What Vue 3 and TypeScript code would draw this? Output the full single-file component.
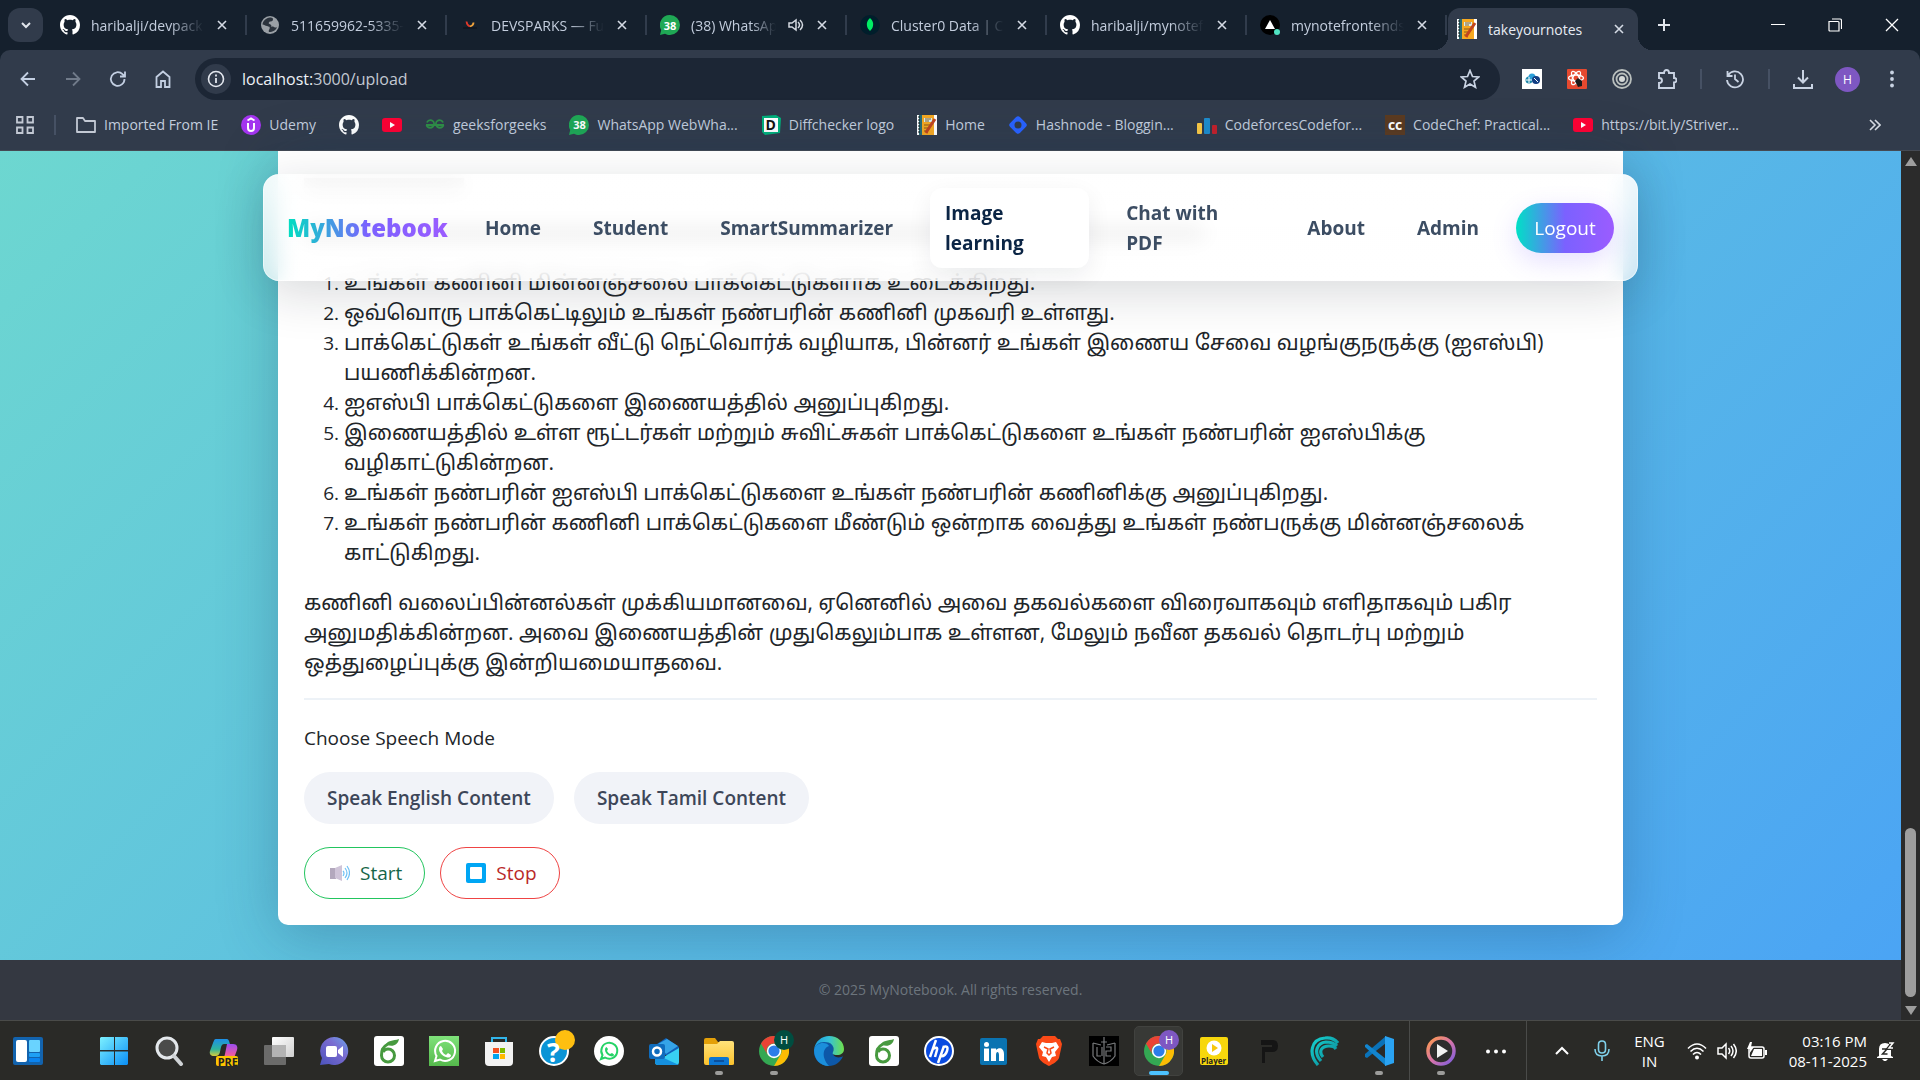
<script setup lang="ts">
interface Tab { title: string; icon: string; audio?: boolean }
interface Bookmark { label: string; icon: string }
interface Pin { name: string; icon: string; running?: boolean; active?: boolean; badge?: string }

const tabs: Tab[] = [
  { title: 'haribalji/devpack', icon: 'github' },
  { title: '511659962-5335-4', icon: 'globe' },
  { title: 'DEVSPARKS — Future', icon: 'spark' },
  { title: '(38) WhatsApp', icon: 'wa38', audio: true },
  { title: 'Cluster0 Data | Cloud', icon: 'mongo' },
  { title: 'haribalji/mynotefront', icon: 'github' },
  { title: 'mynotefrontends', icon: 'vercel' },
]

const bookmarks: Bookmark[] = [
  { label: 'Imported From IE', icon: 'folder' },
  { label: 'Udemy', icon: 'udemy' },
  { label: '', icon: 'github' },
  { label: '', icon: 'youtube' },
  { label: 'geeksforgeeks', icon: 'gfg' },
  { label: 'WhatsApp WebWha...', icon: 'wa38' },
  { label: 'Diffchecker logo', icon: 'diff' },
  { label: 'Home', icon: 'notes' },
  { label: 'Hashnode - Bloggin...', icon: 'hashnode' },
  { label: 'CodeforcesCodefor...', icon: 'codeforces' },
  { label: 'CodeChef: Practical...', icon: 'codechef' },
  { label: 'https://bit.ly/Striver...', icon: 'youtube' },
]

// Lettering that sits on top of an icon's artwork
const glyphs: Record<string, string> = {
  wa38: '38',
  diff: 'D',
  codechef: 'cc',
  copilot: 'PRE',
  help: '?',
  player: 'Player',
}

const steps: string[][] = [
  ['உங்கள் கணினி மின்னஞ்சலை பாக்கெட்டுகளாக உடைக்கிறது.'],
  ['ஒவ்வொரு பாக்கெட்டிலும் உங்கள் நண்பரின் கணினி முகவரி உள்ளது.'],
  ['பாக்கெட்டுகள் உங்கள் வீட்டு நெட்வொர்க் வழியாக, பின்னர் உங்கள் இணைய சேவை வழங்குநருக்கு (ஐஎஸ்பி)', 'பயணிக்கின்றன.'],
  ['ஐஎஸ்பி பாக்கெட்டுகளை இணையத்தில் அனுப்புகிறது.'],
  ['இணையத்தில் உள்ள ரூட்டர்கள் மற்றும் சுவிட்சுகள் பாக்கெட்டுகளை உங்கள் நண்பரின் ஐஎஸ்பிக்கு', 'வழிகாட்டுகின்றன.'],
  ['உங்கள் நண்பரின் ஐஎஸ்பி பாக்கெட்டுகளை உங்கள் நண்பரின் கணினிக்கு அனுப்புகிறது.'],
  ['உங்கள் நண்பரின் கணினி பாக்கெட்டுகளை மீண்டும் ஒன்றாக வைத்து உங்கள் நண்பருக்கு மின்னஞ்சலைக்', 'காட்டுகிறது.'],
]

const summary: string[] = [
  'கணினி வலைப்பின்னல்கள் முக்கியமானவை, ஏனெனில் அவை தகவல்களை விரைவாகவும் எளிதாகவும் பகிர',
  'அனுமதிக்கின்றன. அவை இணையத்தின் முதுகெலும்பாக உள்ளன, மேலும் நவீன தகவல் தொடர்பு மற்றும்',
  'ஒத்துழைப்புக்கு இன்றியமையாதவை.',
]

const pins: Pin[] = [
  { name: 'Start', icon: 'start' },
  { name: 'Search', icon: 'search' },
  { name: 'Copilot', icon: 'copilot' },
  { name: 'Task view', icon: 'taskview' },
  { name: 'Chat', icon: 'chat' },
  { name: 'Leaf', icon: 'leaf' },
  { name: 'WhatsApp', icon: 'wagreen' },
  { name: 'Store', icon: 'store' },
  { name: 'Help', icon: 'help' },
  { name: 'WhatsApp Web', icon: 'wawhite' },
  { name: 'Outlook', icon: 'outlook' },
  { name: 'File Explorer', icon: 'explorer', running: true },
  { name: 'Chrome', icon: 'chrome', running: true, badge: 'green' },
  { name: 'Edge', icon: 'edge' },
  { name: 'Leaf 2', icon: 'leaf' },
  { name: 'HP', icon: 'hp' },
  { name: 'LinkedIn', icon: 'linkedin' },
  { name: 'Brave', icon: 'brave' },
  { name: 'Shield', icon: 'shield' },
  { name: 'Chrome profile', icon: 'chrome', active: true, badge: 'purple' },
  { name: 'Player', icon: 'player' },
  { name: 'P', icon: 'pglyph' },
  { name: 'Wave', icon: 'wave' },
  { name: 'VS Code', icon: 'vscode', running: true },
]
</script>

<template>
  <div class="desktop">
    <svg class="sprite" aria-hidden="true">
      <defs>
        <linearGradient id="g-win" x1="0" y1="0" x2="1" y2="1"><stop offset="0" stop-color="#7df1ff" /><stop offset="1" stop-color="#0a8ef5" /></linearGradient>
        <linearGradient id="g-cop1" x1="0" y1="0" x2="0" y2="1"><stop offset="0" stop-color="#1d8fe8" /><stop offset=".6" stop-color="#2fb49c" /><stop offset="1" stop-color="#d8cf3a" /></linearGradient>
        <linearGradient id="g-cop2" x1="0" y1="0" x2="0" y2="1"><stop offset="0" stop-color="#9b4df0" /><stop offset=".6" stop-color="#e858a8" /><stop offset="1" stop-color="#ff9a5c" /></linearGradient>
        <linearGradient id="g-chat" x1="0" y1="1" x2="1" y2="0"><stop offset="0" stop-color="#4b53bc" /><stop offset=".6" stop-color="#7a6bd0" /><stop offset="1" stop-color="#6aa5ea" /></linearGradient>
        <linearGradient id="g-wa" x1="0" y1="0" x2="0" y2="1"><stop offset="0" stop-color="#7fe27a" /><stop offset="1" stop-color="#55b94c" /></linearGradient>
        <linearGradient id="g-edge" x1="0" y1="0" x2="1" y2="0"><stop offset="0" stop-color="#1b9de2" /><stop offset=".5" stop-color="#35c1d8" /><stop offset="1" stop-color="#6fe04a" /></linearGradient>
        <linearGradient id="g-fold" x1="0" y1="0" x2="0" y2="1"><stop offset="0" stop-color="#ffe27a" /><stop offset="1" stop-color="#fcc22d" /></linearGradient>
        <linearGradient id="g-media" x1="0" y1="0" x2="1" y2="1"><stop offset="0" stop-color="#ff9b4a" /><stop offset=".5" stop-color="#d875a8" /><stop offset="1" stop-color="#7a5be0" /></linearGradient>
        <linearGradient id="g-wave" x1="0" y1="0" x2="1" y2="1"><stop offset="0" stop-color="#16d3d0" /><stop offset="1" stop-color="#0a7f90" /></linearGradient>
        <linearGradient id="g-paper" x1="0" y1="0" x2="1" y2="1"><stop offset="0" stop-color="#fff" /><stop offset="1" stop-color="#cfcfcf" /></linearGradient>
      </defs>

      <symbol id="i-github" viewBox="0 0 16 16"><path fill="#fff" fill-rule="evenodd" d="M8 0C3.58 0 0 3.58 0 8c0 3.54 2.29 6.53 5.47 7.59.4.07.55-.17.55-.38 0-.19-.01-.82-.01-1.49-2.01.37-2.53-.49-2.69-.94-.09-.23-.48-.94-.82-1.13-.28-.15-.68-.52-.01-.53.63-.01 1.08.58 1.23.82.72 1.21 1.87.87 2.33.66.07-.52.28-.87.51-1.07-1.78-.2-3.64-.89-3.64-3.95 0-.87.31-1.59.82-2.15-.08-.2-.36-1.02.08-2.12 0 0 .67-.21 2.2.82.64-.18 1.32-.27 2-.27s1.36.09 2 .27c1.53-1.04 2.2-.82 2.2-.82.44 1.1.16 1.92.08 2.12.51.56.82 1.27.82 2.15 0 3.07-1.87 3.75-3.65 3.95.29.25.54.73.54 1.48 0 1.07-.01 1.93-.01 2.2 0 .21.15.46.55.38A8.01 8.01 0 0016 8c0-4.42-3.58-8-8-8z" /></symbol>
      <symbol id="i-globe" viewBox="0 0 20 20"><circle cx="10" cy="10" r="9" fill="#9aa0a6" /><path fill="#2b333d" d="M10 2.500c-4 .5-7 3-7.500 7 2 0 2.500 1.500 4.500 1.500 1 0 1.500 1 3 1 2.500 0 1.500-2.500-.5-3-1.500-.5-.5-2.500 1-2.500 2 0 2.500-1 2.500-2.500 0-1-1.500-1.500-3-1.500zM9.500 12c1 2-1.500 3-.5 5 4 0 7-1.500 8-5-2 1.500-3-.5-4-.5s-2 .5-3.500.5z" /></symbol>
      <symbol id="i-spark" viewBox="0 0 20 20"><path d="M6.500 6.500q.5 4 3.500 5" stroke="#e0392b" stroke-width="1.800" fill="none" /><path d="M10 11.500q3.500-1 3.500-4" stroke="#f0a33c" stroke-width="1.800" fill="none" /><path d="M3 13h14" stroke="#0c1118" stroke-width="1" /></symbol>
      <symbol id="i-wa38" viewBox="0 0 20 20"><path fill="#1fa855" d="M10 0a10 10 0 0 1 0 20c-2 0-3.500-.5-5-1.300L0 20l1.200-5A10 10 0 0 1 10 0z" /></symbol>
      <symbol id="i-mongo" viewBox="0 0 20 20"><circle cx="10" cy="10" r="10" fill="#001e2b" /><path fill="#00ed64" d="M10 3c3 3 3.500 5 3 8-.4 2-1.500 3.500-3 5-1.500-1.500-2.600-3-3-5-.5-3 0-5 3-8z" /></symbol>
      <symbol id="i-vercel" viewBox="0 0 20 20"><circle cx="10" cy="10" r="10" fill="#000" /><path fill="#fff" d="M10 5l5 9H5z" /><circle cx="17" cy="17" r="3" fill="#50e3c2" /></symbol>
      <symbol id="i-notes" viewBox="0 0 20 20"><path fill="#fff" d="M0 0h20v20H0z" /><path fill="#2a6a72" d="M2 0h3v20H2z" /><path fill="#f6a821" d="M5 0h12v20H5z" /><path fill="#d9eef0" d="M7 3h8v4H7z" /><path d="M8 4h6M8 6h4M7 10h6M7 13h4M7 16h3" stroke="#8a5a18" stroke-width="1" /><path d="M18 4L10 16l-1 2" stroke="#c0451f" stroke-width="3" fill="none" /><path d="M1 2h2M1 5h2M1 8h2M1 11h2M1 14h2M1 17h2" stroke="#111" stroke-width="1" /></symbol>
      <symbol id="i-folder" viewBox="0 0 20 20"><path fill="none" stroke="#c3c9d4" stroke-width="1.800" stroke-linejoin="round" d="M1 17V3h6l2 3h10v11z" /></symbol>
      <symbol id="i-udemy" viewBox="0 0 20 20"><circle cx="10" cy="10" r="10" fill="#a435f0" /><path d="M6.500 5.500L10 3.500l3.500 2M7 8v5a3 3 0 0 0 6 0V8" stroke="#fff" stroke-width="2" fill="none" /></symbol>
      <symbol id="i-youtube" viewBox="0 0 20 20"><rect y="3" width="20" height="14" rx="3" fill="#ff0033" /><path fill="#fff" d="M8 7l5 3-5 3z" /></symbol>
      <symbol id="i-gfg" viewBox="0 0 20 20"><path fill="none" stroke="#2f8d46" stroke-width="1.800" d="M1 10h18M2 7.500A3.600 3.600 0 0 1 8.800 10 3.800 3.800 0 0 1 1.500 10M18 7.500A3.600 3.600 0 0 0 11.200 10a3.800 3.800 0 0 0 7.300 0" /></symbol>
      <symbol id="i-diff" viewBox="0 0 20 20"><path fill="#00b07b" d="M1 1l14-1 5 3-1 15-15 2-3-3z" /><rect x="3" y="3" width="14" height="14" fill="#fff" /></symbol>
      <symbol id="i-hashnode" viewBox="0 0 20 20"><rect x="3" y="3" width="14" height="14" rx="3" fill="#2962ff" transform="rotate(45 10 10)" /><circle cx="10" cy="10" r="3.500" fill="#313b4b" /></symbol>
      <symbol id="i-codeforces" viewBox="0 0 20 20"><rect x="0" y="8" width="5" height="11" rx="1" fill="#fbc944" /><rect x="7" y="3" width="6" height="16" rx="1" fill="#1e8ccc" /><rect x="15" y="10" width="5" height="9" rx="1" fill="#c4202a" /></symbol>
      <symbol id="i-codechef" viewBox="0 0 20 20"><path fill="#5b3a20" d="M0 0h20v20H0z" /></symbol>

      <symbol id="i-widgets" viewBox="0 0 30 30"><rect width="30" height="28" y="1" rx="2" fill="#1263ae" /><rect x="3" y="4" width="11" height="22" rx="2" fill="#fff" /><rect x="16" y="4" width="11" height="12" rx="1" fill="#69d3ff" /><rect x="16" y="17" width="11" height="4" rx="1" fill="#1ea0f5" /><rect x="16" y="22" width="11" height="4" rx="1" fill="#0a84f0" /></symbol>
      <symbol id="i-start" viewBox="0 0 30 30"><path fill="url(#g-win)" d="M2 1h13v13H1V2zM16 1h12l1 1v12H16zM1 15.500h14V29H2l-1-1zM16 15.500h13V28l-1 1H16z" /></symbol>
      <symbol id="i-search" viewBox="0 0 30 30"><circle cx="13" cy="12" r="10" fill="#4a4b4a" stroke="#e4e8ec" stroke-width="3" /><path d="M20 20l7 8" stroke="#cfd3d6" stroke-width="4" stroke-linecap="round" /></symbol>
      <symbol id="i-copilot" viewBox="0 0 30 30"><path fill="url(#g-cop1)" d="M7 3h10c3 0 3 2 4 5h-6c-3 0-3 4-4 8s-3 4-6 4-5-2-4-5l3-8c1-2 1-4 3-4z" /><path fill="url(#g-cop2)" d="M18 8h6c4 0 5 3 4 6l-3 8c-1 2-2 3-5 3h-8c3 0 3-4 4-7z" /><rect x="7" y="20" width="22" height="10" rx="2" fill="#fdc500" /></symbol>
      <symbol id="i-taskview" viewBox="0 0 30 30"><rect x="8" y="1" width="22" height="20" rx="1" fill="url(#g-paper)" /><rect x="0" y="9" width="22" height="20" rx="1" fill="#777" opacity=".85" /><path d="M8 9h14v12H8z" fill="#b3b3b3" /></symbol>
      <symbol id="i-chat" viewBox="0 0 30 30"><path fill="url(#g-chat)" d="M15 1a14 14 0 1 1-5 27l-9 1 2-7A14 14 0 0 1 15 1z" /><rect x="7" y="10" width="11" height="11" rx="2" fill="#fff" /><path fill="#fff" d="M19 14l5-4v11l-5-4z" /></symbol>
      <symbol id="i-leaf" viewBox="0 0 30 30"><rect width="30" height="30" rx="3" fill="#fff" /><path d="M14 8C8 11 7.500 15 7.500 19.500a6.500 6.500 0 1 0 6.500-6.500q-3 0-5 3" fill="none" stroke="#479a3f" stroke-width="3" /><path fill="#479a3f" d="M12 9c1-5 7-4 13-6-1 6-6 8-12 6z" /></symbol>
      <symbol id="i-wagreen" viewBox="0 0 30 30"><path fill="url(#g-wa)" d="M0 0h30v30H0z" /><path d="M6 25l1.500-5A10 10 0 1 1 11 23.500z" fill="none" stroke="#fff" stroke-width="2" /><path fill="#fff" d="M12 10l2 3-1 2c1 2 2 3 4 4l2-2 3 2c0 3-3 3-5 2-4-1-7-5-7-8 0-2 1-3 2-3z" /></symbol>
      <symbol id="i-store" viewBox="0 0 30 30"><path d="M8 8V2h14v6" fill="none" stroke="#31b5ea" stroke-width="2" /><path fill="#f2f2f2" d="M1 6h28v20q0 4-4 4H5q-4 0-4-4z" /><path fill="#f25022" d="M9 12h6v5H9z" /><path fill="#7fba00" d="M16 12h5v5h-5z" /><path fill="#00a4ef" d="M9 18h6v5H9z" /><path fill="#ffb900" d="M16 18h5v5h-5z" /></symbol>
      <symbol id="i-help" viewBox="0 0 36 36"><circle cx="15" cy="21" r="14" fill="#0a94d6" stroke="#fff" stroke-width="2" /><circle cx="26" cy="10" r="10" fill="#ffbf10" /></symbol>
      <symbol id="i-wawhite" viewBox="0 0 30 30"><circle cx="15" cy="15" r="15" fill="#fff" /><path d="M7 23l1.500-4A8 8 0 1 1 11 21.500z" fill="none" stroke="#25d366" stroke-width="2" /><path fill="#25d366" d="M12.500 11l1.500 2-1 2c1 1.500 2 2.500 3 3l2-1 2 1.500c0 2-2 2.500-4 1.500-3-1-5-4-5-6 0-2 .500-2.500 1.500-3z" /></symbol>
      <symbol id="i-outlook" viewBox="0 0 30 30"><path fill="#0f5fb8" d="M5 10L17 2l13 9v8H5z" /><path fill="#35a4e8" d="M9 8l9-5 11 7-12 8z" /><path fill="#38d0f2" d="M30 12v14q0 3-3 3H9q-3 0-3-3z" /><path fill="#1590df" d="M6 18l24 11H9q-3 0-3-3z" /><rect x="0" y="8" width="16" height="15" rx="2" fill="#0f6cbd" /><circle cx="8" cy="15.500" r="4" fill="none" stroke="#fff" stroke-width="2.500" /></symbol>
      <symbol id="i-explorer" viewBox="0 0 30 30"><path fill="#e3a008" d="M0 4q0-2 2-2h9l3 4h12v6H0z" /><path fill="url(#g-fold)" d="M0 8h13l3-3h12q2 0 2 2v21q0 1-2 1H2q-2 0-2-2z" /><path fill="#0c75d1" d="M5 29v-6q0-2 2-2h16q2 0 2 2v6z" /><path d="M10 25h10" stroke="#0a4f9c" stroke-width="2" /></symbol>
      <symbol id="i-chrome" viewBox="0 0 30 30"><circle cx="15" cy="15" r="15" fill="#34a853" /><path fill="#ea4335" d="M2 7.500A15 15 0 0 1 28 7.500H15a7.500 7.500 0 0 0-6.500 11.200z" /><path fill="#fbbc04" d="M28 7.500A15 15 0 0 1 15 30l6.500-11.200A7.500 7.500 0 0 0 15 7.500z" /><circle cx="15" cy="15" r="7.200" fill="#fff" /><circle cx="15" cy="15" r="5.600" fill="#2b7de9" /></symbol>
      <symbol id="i-edge" viewBox="0 0 30 30"><path fill="#0d58a8" d="M0 16C0 7 7 4 13 6c6 1 8 6 6 10-1 5 6 7 10 4-2 6-8 10-14 10C7 30 0 24 0 16z" /><path fill="url(#g-edge)" d="M0 14C1 5 8 0 15 0c9 0 15 6 15 13 0 4-3 6-7 6s-5-1-4-3c2-5-1-10-9-10C5 6 1 9 0 14z" /><path fill="#1b8fdb" d="M0 14c1-5 5-7 9-7 3 0 5 1 6 3-6 2-8 11 0 20C6 30 0 23 0 14z" /></symbol>
      <symbol id="i-hp" viewBox="0 0 30 30"><circle cx="15" cy="15" r="14" fill="#0a4be0" stroke="#fff" stroke-width="2" /><path d="M12 4L6 21M9 13q5-3 4 1l-2 7M20 10l-6 17M19 11q6-2 4 4-2 6-7 5" fill="none" stroke="#fff" stroke-width="2.500" /></symbol>
      <symbol id="i-linkedin" viewBox="0 0 30 30"><rect x="1" y="2" width="27" height="27" rx="2" fill="#0a73b1" /><circle cx="7.500" cy="8.500" r="2.500" fill="#fff" /><path fill="#fff" d="M5 12.500h5V25H5zM12 12.500h5V14c3-3 8-2 8 4v7h-5v-6c0-4-3-4-3 0v6h-5z" /></symbol>
      <symbol id="i-brave" viewBox="0 0 30 30"><path fill="#fb4a17" d="M9 0h12l3 3h2l2 5-1 5-2 9c-1 3-6 6-10 8-4-2-9-5-10-8L3 13 2 8l2-5h2z" /><path fill="#fff" d="M8 6l4 1h6l4-1 3 5-4 5 1 4-4 1-3 5-3-5-4-1 1-4-4-5z" /><path d="M10 11l4 2-1 4 2 2 2-2-1-4 4-2" stroke="#fb4a17" stroke-width="1.500" fill="none" /></symbol>
      <symbol id="i-shield" viewBox="0 0 30 30"><path d="M0 0h30v30H0z" /><path d="M15 1v27M12 6h6M4 7l8 2M26 7l-8 2M4 7v13q4 6 11 8 7-2 11-8V7M8 11v9h4M13 11v9M17 11h5v4h-5v5h5" fill="none" stroke="#77797b" stroke-width="1.200" /></symbol>
      <symbol id="i-player" viewBox="0 0 30 30"><rect x="1" y="1" width="28" height="28" rx="2" fill="#f7d70c" /><circle cx="15" cy="12" r="7.500" fill="#fff" /><path fill="#f7c80c" d="M13 8l6 4-6 4z" /></symbol>
      <symbol id="i-pglyph" viewBox="0 0 30 30"><path fill="#151515" d="M7 4h12q5 0 5 6t-6 6h-7v11H8V11h10V9H7z" /></symbol>
      <symbol id="i-wave" viewBox="0 0 30 30"><path d="M9 29C-1 18 2 3 16 2q8-1 13 5M12 25C4 16 8 7 17 6q7 0 11 4M14 21c-5-6-1-11 6-11q5 0 7 3" fill="none" stroke="url(#g-wave)" stroke-width="3.200" /></symbol>
      <symbol id="i-vscode" viewBox="0 0 30 30"><path fill="#0a72b8" d="M22 0L1 18v3l2 1 19-15z" /><path fill="#1285cf" d="M22 30L1 11V9l2-1 19 15z" /><path fill="#2aa3f2" d="M21 0l9 3v24l-9 3z" /></symbol>
      <symbol id="i-media" viewBox="0 0 30 30"><circle cx="15" cy="15" r="13" fill="#2d2d2d" stroke="url(#g-media)" stroke-width="3.500" /><path fill="#f2f2f2" d="M11 8l11 7-11 7z" /></symbol>
    </svg>

    <header class="chrome">
      <div class="tabstrip">
        <button class="tab-search" aria-label="Search tabs"><svg width="12" height="8" viewBox="0 0 12 8"><path d="M2 2l4 4 4-4" fill="none" stroke="#e1e5ec" stroke-width="2" /></svg></button>
        <div v-for="(t, i) in tabs" :key="i" class="tab">
          <span class="fav"><svg><use :href="'#i-' + t.icon" /></svg><b v-if="glyphs[t.icon]" class="glyph" :class="t.icon">{{ glyphs[t.icon] }}</b></span>
          <span class="tab-title">{{ t.title }}</span>
          <svg v-if="t.audio" class="audio" viewBox="0 0 16 16"><path d="M1 6h3l4-3v10L4 10H1zM10 5q3 3 0 6M12 3q5 5 0 10" fill="none" stroke="#d3d8e0" stroke-width="1.500" /></svg>
          <button class="close" aria-label="Close tab"><svg viewBox="0 0 10 10"><path d="M1 1l8 8M9 1L1 9" /></svg></button>
        </div>
        <div class="tab selected">
          <span class="fav"><svg><use href="#i-notes" /></svg></span>
          <span class="tab-title">takeyournotes</span>
          <button class="close" aria-label="Close tab"><svg viewBox="0 0 10 10"><path d="M1 1l8 8M9 1L1 9" /></svg></button>
        </div>
        <button class="plain new-tab" aria-label="New tab"><svg width="14" height="14" viewBox="0 0 14 14"><path d="M7 1v12M1 7h12" stroke="#e1e5ec" stroke-width="2" /></svg></button>
        <div class="win-controls">
          <button class="plain" aria-label="Minimize"><svg width="14" height="14" viewBox="0 0 14 14"><path d="M0 6.500h14" stroke="#fff" stroke-width="1" /></svg></button>
          <button class="plain" aria-label="Restore"><svg width="14" height="14" viewBox="0 0 14 14"><path d="M1 3.500h9q1 0 1 1V13H2q-1 0-1-1zM4 1h8q1.500 0 1.500 1.500V11" fill="none" stroke="#fff" stroke-width="1.200" /></svg></button>
          <button class="plain" aria-label="Close"><svg width="14" height="14" viewBox="0 0 14 14"><path d="M1 1l12 12M13 1L1 13" stroke="#fff" stroke-width="1.300" /></svg></button>
        </div>
      </div>

      <div class="toolbar">
        <button class="plain tool" aria-label="Back"><svg viewBox="0 0 20 20"><path d="M17 10H4M10 3.500L3.500 10l6.500 6.500" /></svg></button>
        <button class="plain tool dim" aria-label="Forward"><svg viewBox="0 0 20 20"><path d="M3 10h13M10 3.500l6.500 6.500-6.500 6.500" /></svg></button>
        <button class="plain tool" aria-label="Reload"><svg viewBox="0 0 20 20"><path d="M16.500 10A6.800 6.800 0 1 1 14.500 5.200L17 7.500M17 2.500v5h-5" /></svg></button>
        <button class="plain tool" aria-label="Home"><svg viewBox="0 0 20 20"><path d="M3.500 18V8L10 2.500 16.500 8v10H12v-6H8v6z" /></svg></button>
        <div class="omnibox">
          <span class="info"><svg width="18" height="18" viewBox="0 0 18 18"><circle cx="9" cy="9" r="7.500" fill="none" stroke="#e3e7ee" stroke-width="1.600" /><path d="M9 8v5M9 4.500v2" stroke="#e3e7ee" stroke-width="1.800" /></svg></span>
          <span class="url"><b>localhost:</b>3000/upload</span>
          <button class="plain" aria-label="Bookmark"><svg width="20" height="20" viewBox="0 0 20 20"><path d="M10 1.500l2.500 6 6.200.500-4.700 4.100 1.500 6.200L10 15l-5.500 3.300L6 12.100 1.300 8l6.200-.500z" fill="none" stroke="#c9d3e3" stroke-width="1.700" /></svg></button>
        </div>
        <div class="extensions">
          <svg viewBox="0 0 20 20"><path d="M0 0h20v20H0z" fill="#fff" /><circle cx="7" cy="11" r="3.500" fill="#1d86a8" /><circle cx="10" cy="8" r="3.500" fill="#2c9fd8" /><circle cx="14" cy="11" r="4" fill="#123e84" /><path d="M7 8v6M4 11h6M12 9l4 4" stroke="#fff" stroke-width="1" /></svg>
          <svg viewBox="0 0 20 20"><rect width="20" height="20" rx="1" fill="#e6492f" /><g fill="none" stroke="#fff" stroke-width="1.300"><ellipse cx="9" cy="9" rx="7.500" ry="3" /><ellipse cx="9" cy="9" rx="7.500" ry="3" transform="rotate(60 9 9)" /><ellipse cx="9" cy="9" rx="7.500" ry="3" transform="rotate(120 9 9)" /></g><path d="M8 12l3-3 4 3v5l-4 1z" fill="#1c1c1c" /></svg>
          <svg viewBox="0 0 20 20"><g fill="none" stroke="#b9bfbd" stroke-width="1.800"><circle cx="10" cy="10" r="9" /><circle cx="10" cy="10" r="5.500" /></g><circle cx="10" cy="10" r="3" fill="#d5d9d8" /></svg>
          <svg viewBox="0 0 20 20"><path d="M2 4h5q0-3 2.500-3T12 4h5v5q2.500 0 2.500 2.200T17 13.500V19H2v-5q3 0 3-2.500T2 9z" fill="none" stroke="#c9d3e3" stroke-width="1.900" /></svg>
          <i class="rule"></i>
          <svg viewBox="0 0 20 20"><path d="M3 6.500A8 8 0 1 1 2 11M2.500 2v5h5M10 5.500V10l3.500 3" fill="none" stroke="#c9d3e3" stroke-width="1.800" /></svg>
          <i class="rule"></i>
          <svg viewBox="0 0 20 20"><path d="M10 1v12M5 8.500l5 5 5-5M1 15v4h18v-4" fill="none" stroke="#c9d3e3" stroke-width="2" /></svg>
          <span class="avatar">H</span>
          <svg viewBox="0 0 20 20"><g fill="#c9d3e3"><circle cx="10" cy="3.500" r="1.900" /><circle cx="10" cy="10" r="1.900" /><circle cx="10" cy="16.500" r="1.900" /></g></svg>
        </div>
      </div>

      <nav class="bookmarks" aria-label="Bookmarks">
        <svg class="apps" viewBox="0 0 18 18"><path d="M1 1h5.500v5.500H1zM11.500 1H17v5.500h-5.500zM1 11.500h5.500V17H1zM11.500 11.500H17V17h-5.500z" fill="none" stroke="#c3c9d4" stroke-width="1.800" /></svg>
        <i class="rule"></i>
        <a v-for="(b, i) in bookmarks" :key="i" href="#" class="bookmark" :aria-label="b.label || b.icon">
          <span class="fav"><svg><use :href="'#i-' + b.icon" /></svg><b v-if="glyphs[b.icon]" class="glyph" :class="b.icon">{{ glyphs[b.icon] }}</b></span>
          <span v-if="b.label">{{ b.label }}</span>
        </a>
        <button class="plain more" aria-label="More bookmarks"><svg width="12" height="12" viewBox="0 0 12 12"><path d="M1 1l5 5-5 5M6 1l5 5-5 5" fill="none" stroke="#d5dae2" stroke-width="1.600" /></svg></button>
      </nav>
    </header>

    <div class="viewport">
      <div class="page">
        <nav class="navbar" aria-label="Main">
          <span class="brand">MyNotebook</span>
          <a href="#">Home</a>
          <a href="#">Student</a>
          <a href="#">SmartSummarizer</a>
          <a href="#" class="current">Image<br>learning</a>
          <a href="#" class="chat">Chat with<br>PDF</a>
          <a href="#">About</a>
          <a href="#">Admin</a>
          <button class="logout">Logout</button>
        </nav>

        <main class="stage">
          <section class="card">
            <div class="passed short"></div>
            <div class="passed long"></div>
            <ol>
              <li v-for="(s, i) in steps" :key="i"><template v-for="(l, j) in s" :key="j"><br v-if="j">{{ l }}</template></li>
            </ol>
            <p><template v-for="(l, j) in summary" :key="j"><br v-if="j">{{ l }}</template></p>
            <hr>
            <div>Choose Speech Mode</div>
            <div class="modes">
              <button>Speak English Content</button>
              <button>Speak Tamil Content</button>
            </div>
            <div class="actions">
              <button class="start"><svg viewBox="0 0 20 20"><path fill="#b3a8bd" d="M0 5h6v11H0z" /><path fill="#cfc4d8" d="M5 5l7-3v16l-7-3z" /><path d="M13 8q2 2 0 5M15 5q4 5 0 10M17 3q5 7 0 14" fill="none" stroke="#6fc0f5" stroke-width="1.200" /></svg>Start</button>
              <button class="stop"><svg viewBox="0 0 20 20"><rect width="20" height="20" rx="2" fill="#00a6f4" /><rect x="4" y="4" width="12" height="12" rx="1" fill="#fff" /></svg>Stop</button>
            </div>
          </section>
        </main>

        <footer>© 2025 MyNotebook. All rights reserved.</footer>
      </div>

      <div class="scrollbar" aria-hidden="true">
        <svg viewBox="0 0 12 10"><path d="M6 0l6 9H0z" fill="#9e9e9e" /></svg>
        <i class="thumb"></i>
        <svg viewBox="0 0 12 10"><path d="M6 10L0 1h12z" fill="#9e9e9e" /></svg>
      </div>
    </div>

    <div class="taskbar">
      <button class="pin widgets" aria-label="Widgets"><svg><use href="#i-widgets" /></svg></button>
      <button v-for="p in pins" :key="p.name" class="pin" :class="{ running: p.running, active: p.active, wide: p.icon === 'help' }" :aria-label="p.name">
        <svg><use :href="'#i-' + p.icon" /></svg>
        <b v-if="glyphs[p.icon]" class="glyph" :class="p.icon">{{ glyphs[p.icon] }}</b>
        <span v-if="p.badge" class="badge" :class="p.badge">H</span>
      </button>
      <div class="media">
        <button class="pin running" aria-label="Media Player"><svg><use href="#i-media" /></svg></button>
        <button class="pin" aria-label="More"><svg viewBox="0 0 30 30"><g fill="#fff"><circle cx="7" cy="15.500" r="2" /><circle cx="15" cy="15.500" r="2" /><circle cx="23" cy="15.500" r="2" /></g></svg></button>
      </div>
      <div class="tray">
        <svg width="16" height="10" viewBox="0 0 16 10"><path d="M2 8l6-6 6 6" fill="none" stroke="#fff" stroke-width="2" /></svg>
        <svg class="mic" width="16" height="22" viewBox="0 0 16 22"><path d="M8 1q3.500 0 3.500 3.500v5Q11.500 13 8 13T4.500 9.500v-5Q4.500 1 8 1zM1 9q0 7 7 7t7-7M8 16v5" fill="none" stroke="#7fd0ea" stroke-width="1.600" /></svg>
        <span class="lang">ENG<br>IN</span>
        <svg class="wifi" width="20" height="18" viewBox="0 0 20 18"><path d="M1 6.500q9-9 18 0M3.500 9.500q6.500-6.500 13 0M6 12.500q4-4 8 0" fill="none" stroke="#fff" stroke-width="1.600" /><circle cx="10" cy="15.500" r="2" fill="#fff" /></svg>
        <svg width="20" height="18" viewBox="0 0 20 18"><path d="M1 6h4l4-4v14l-4-4H1zM11.500 6q2.500 3 0 6M14 4q4 5 0 10M16.500 2q5.500 7 0 14" fill="none" stroke="#fff" stroke-width="1.500" /></svg>
        <svg width="20" height="18" viewBox="0 0 20 18"><rect x="2" y="5" width="15" height="11" rx="2" fill="none" stroke="#fff" stroke-width="1.500" /><path fill="#fff" d="M7 7h8v7H4zM18 8h2v5h-2zM3 0l-3 7h3l-1 5 5-7H4l1-5z" /></svg>
        <span class="clock">03:16 PM<br>08-11-2025</span>
        <svg width="18" height="20" viewBox="0 0 18 20"><path fill="#fff" d="M2 15V8q0-6 6-6 6 0 6 6v7l2 1v1H0v-1zM5 18h6l-2 2H7z" /><path d="M12 2h4l-4 5h4" fill="none" stroke="#2a2a27" stroke-width="4" /><path d="M5 8h5l-4.500 5h5" fill="none" stroke="#2a2a27" stroke-width="1.500" /><path d="M12 2h4l-4 5h4" fill="none" stroke="#fff" stroke-width="1.500" /></svg>
      </div>
    </div>
  </div>
</template>

<style>
html,
body {
  margin: 0;
}
</style>

<style scoped>
* {
  box-sizing: border-box;
}
button {
  font: inherit;
  color: inherit;
  border: 0;
  padding: 0;
  background: none;
}
a {
  color: inherit;
  text-decoration: none;
}
.desktop {
  display: flex;
  flex-direction: column;
  min-height: 100vh;
  overflow: hidden;
  font-family: "Open Sans", "Noto Sans", "Noto Sans Tamil", sans-serif;
  font-size: 14px;
}
.sprite {
  position: absolute;
  width: 0;
  height: 0;
}
.chrome {
  background: #15202d;
  color: #c3cddd;
}
.tabstrip {
  display: flex;
  align-items: center;
  height: 50px;
  padding-left: 8px;
}
.tab-search {
  display: grid;
  place-items: center;
  width: 35px;
  height: 34px;
  margin-right: 3px;
  border-radius: 12px;
  background: #313b4b;
}
.tab {
  position: relative;
  display: flex;
  align-items: center;
  width: 200px;
  padding: 0 18px 0 14px;
}
.tab::after {
  content: "";
  width: 2px;
  height: 20px;
  position: absolute;
  right: -1px;
  background: #313c4c;
}
.fav {
  position: relative;
  display: grid;
  flex: none;
  place-items: center;
}
.fav svg {
  width: 20px;
  height: 20px;
}
.glyph {
  position: absolute;
  color: #fff;
  font-size: 11px;
  font-weight: 700;
  line-height: 1;
}
.glyph.diff {
  color: #111;
  font-size: 14px;
}
.glyph.codechef {
  font-size: 14px;
}
.glyph.copilot {
  right: 13px;
  bottom: 9px;
  color: #222;
  font-size: 11px;
}
.glyph.help {
  top: 12px;
  font-size: 27px;
}
.glyph.player {
  bottom: 11px;
  color: #222;
  font-size: 8px;
}
.tab-title {
  flex: 1;
  margin: 0 12px 0 11px;
  white-space: nowrap;
  overflow: hidden;
  mask-image: linear-gradient(90deg, #000 70%, transparent);
}
.audio {
  width: 16px;
  height: 16px;
  margin-right: 12px;
}
.close {
  display: grid;
  place-items: center;
  width: 12px;
  height: 20px;
}
.close svg {
  width: 10px;
  height: 10px;
  fill: none;
  stroke: #d5dbe5;
  stroke-width: 1.6;
}
.tab.selected {
  align-self: flex-end;
  width: 190px;
  height: 42px;
  margin-left: 2px;
  padding: 0 13px 0 9px;
  border-radius: 12px 12px 0 0;
  background: #313b4b;
  color: #e6ebf3;
}
.selected::before,
.tab.selected::after {
  content: "";
  position: absolute;
  bottom: 0;
  width: 14px;
  height: 14px;
}
.selected::before {
  left: -14px;
  background: radial-gradient(circle at 0 0, transparent 14px, #313b4b 14px);
}
.tab.selected::after {
  right: -14px;
  background: radial-gradient(circle at 100% 0, transparent 14px, #313b4b 14px);
}
.selected .tab-title {
  mask-image: none;
}
.plain {
  display: grid;
  place-items: center;
}
.new-tab {
  width: 28px;
  height: 28px;
  margin-left: 12px;
}
.win-controls {
  display: flex;
  margin-left: auto;
}
.win-controls button {
  width: 57px;
  height: 50px;
}
.toolbar {
  display: flex;
  align-items: center;
  height: 58px;
  padding: 0 5px;
  border-radius: 10px 10px 0 0;
  background: #313b4b;
}
.tool {
  width: 45px;
  height: 40px;
}
.tool svg {
  width: 20px;
  height: 20px;
  fill: none;
  stroke: #c3cfe2;
  stroke-width: 1.8;
}
.tool.dim svg {
  stroke: #717b8a;
}
.omnibox {
  display: flex;
  flex: 1;
  align-items: center;
  height: 42px;
  margin-left: 10px;
  padding: 0 20px 0 6px;
  border-radius: 21px;
  background: #1c2635;
}
.info {
  display: grid;
  place-items: center;
  width: 30px;
  height: 30px;
  border-radius: 50%;
  background: #313b4b;
}
.url {
  flex: 1;
  margin-left: 11px;
  font-size: 16px;
  color: #c3c9d2;
}
.url b {
  font-weight: 400;
  color: #eef1f6;
}
.extensions {
  display: flex;
  align-items: center;
  gap: 25px;
  padding: 0 13px 0 22px;
}
.extensions svg {
  width: 20px;
  height: 20px;
}
.rule {
  width: 2px;
  height: 20px;
  margin: 0 -2px;
  background: #465164;
}
.avatar {
  display: grid;
  place-items: center;
  width: 25px;
  height: 25px;
  margin: 0 -3px;
  border-radius: 50%;
  background: #7e57c2;
  color: #fff;
  font-size: 12px;
}
.bookmarks {
  display: flex;
  align-items: center;
  gap: 23px;
  height: 43px;
  padding: 0 39px 9px 16px;
  border-bottom: 1px solid #454a53;
  background: #313b4b;
}
.bookmarks .rule {
  margin: 0 -3px;
}
.apps {
  width: 18px;
  height: 18px;
}
.bookmark {
  display: flex;
  align-items: center;
  gap: 8px;
  white-space: nowrap;
}
.more {
  margin-left: auto;
}
.viewport {
  display: flex;
  flex: 1;
}
.page {
  position: relative;
  display: flex;
  flex: 1;
  flex-direction: column;
  background: linear-gradient(135deg, #6dd7d0, #4aa3f5);
  font-size: 19px;
  line-height: 30px;
}
.navbar {
  position: absolute;
  z-index: 2;
  top: 23px;
  left: 263px;
  right: 263px;
  display: flex;
  align-items: center;
  gap: 22px;
  height: 107px;
  padding: 0 23px;
  border: 1px solid rgba(255, 255, 255, 0.5);
  border-radius: 16px;
  background: linear-gradient(rgba(255, 255, 255, 0.9), rgba(255, 255, 255, 0.7));
  backdrop-filter: blur(10px);
  box-shadow: 0 12px 50px rgba(16, 24, 40, 0.16);
  color: #3c4d63;
  font-weight: 700;
}
.navbar a {
  padding: 10px 15px;
  border-radius: 12px;
}
.brand {
  background: linear-gradient(90deg, #00e0c0, #7b61ff 50%, #9b5cff);
  background-clip: text;
  color: transparent;
  font-size: 24px;
  font-weight: 800;
}
.navbar .current {
  flex: 1;
  background: #fff;
  color: #0b2545;
  box-shadow: 0 8px 24px rgba(16, 24, 40, 0.07);
}
.navbar .chat {
  flex: 1;
}
.logout {
  width: 98px;
  height: 50px;
  border-radius: 25px;
  background: linear-gradient(90deg, #00e0c6, #7b61ff 50%, #9b5cff);
  box-shadow: 0 8px 26px rgba(123, 97, 255, 0.2);
  color: #fff;
  font-weight: 400;
}
.stage {
  padding: 0 278px 35px;
}
.card {
  padding: 17px 26px 26px;
  border-radius: 0 0 10px 10px;
  background: #fff;
  box-shadow: 0 10px 60px rgba(20, 60, 100, 0.3);
  color: #212529;
}
.passed {
  height: 10px;
  margin: 10px 0 39px;
  background: #999;
}
.short {
  width: 160px;
}
.long {
  width: 900px;
  margin-bottom: 30px;
}
ol {
  margin: 0 0 20px;
  padding-left: 40px;
}
ol,
p {
  font-size: 21px;
}
li::marker {
  font-size: 19px;
}
p {
  margin: 0;
}
hr {
  height: 2px;
  margin: 21px 0 23px;
  border: 0;
  background: #edf2f7;
}
.modes,
.actions {
  display: flex;
  gap: 20px;
  margin-top: 19px;
}
.modes button {
  height: 52px;
  padding: 0 23px;
  border-radius: 26px;
  background: #f1f3f8;
  color: #3d4658;
  font-weight: 600;
}
.actions {
  gap: 15px;
  margin-top: 23px;
}
.actions button {
  display: flex;
  align-items: center;
  gap: 10px;
  height: 52px;
  padding: 0 22px 0 25px;
  border: 1px solid #22c55e;
  border-radius: 26px;
  color: #166548;
}
.actions .stop {
  border-color: #ef4444;
  color: #b92828;
}
.actions svg {
  width: 20px;
  height: 20px;
}
footer {
  display: grid;
  flex: 1;
  place-items: center;
  min-height: 60px;
  background: #343841;
  color: #6c757d;
  font-size: 14px;
}
.scrollbar {
  display: flex;
  flex-direction: column;
  align-items: center;
  width: 19px;
  padding: 6px 0 5px;
  background: #2b2b2b;
}
.scrollbar svg {
  width: 12px;
  height: 10px;
}
.thumb {
  width: 11px;
  height: 169px;
  margin: auto 0 8px;
  border-radius: 6px;
  background: #9e9e9e;
}
.taskbar {
  display: flex;
  align-items: center;
  height: 60px;
  border-top: 1px solid #4a4b49;
  background: #2a2a27;
  color: #fff;
}
.pin {
  position: relative;
  display: grid;
  place-items: center;
  width: 55px;
  height: 50px;
}
.pin svg {
  width: 30px;
  height: 30px;
}
.pin.wide svg {
  width: 36px;
  height: 36px;
  margin: -6px -6px 0 0;
}
.widgets {
  margin-right: 31px;
}
.running::after,
.active::after {
  content: "";
  position: absolute;
  bottom: 1px;
  width: 8px;
  height: 4px;
  border-radius: 2px;
  background: #9c9c9a;
}
.active::after {
  width: 20px;
  background: #4cc2ff;
}
.active::before {
  content: "";
  position: absolute;
  inset: 0 3px;
  border: 1px solid #41423f;
  border-radius: 5px;
  background: #383936;
}
.active svg {
  position: relative;
}
.badge {
  position: absolute;
  top: 4px;
  right: 7px;
  display: grid;
  place-items: center;
  width: 20px;
  height: 20px;
  border-radius: 50%;
  background: #004d40;
  font-size: 11px;
}
.badge.purple {
  background: #7e57c2;
}
.media {
  display: flex;
  align-items: center;
  height: 60px;
  margin-left: 3px;
  padding: 0 3px;
  border-left: 1px solid #4a4b49;
  border-right: 1px solid #4a4b49;
}
.tray {
  display: flex;
  flex: 1;
  align-items: center;
  justify-content: flex-end;
  padding-right: 25px;
  line-height: 20px;
  font-size: 15px;
}
.tray > * {
  margin-left: 10px;
}
.tray .mic {
  margin-left: 24px;
}
.tray .lang {
  margin-left: 24px;
  text-align: center;
}
.tray .wifi {
  margin-left: 22px;
}
.tray .clock {
  margin-left: 22px;
  text-align: right;
}
</style>
